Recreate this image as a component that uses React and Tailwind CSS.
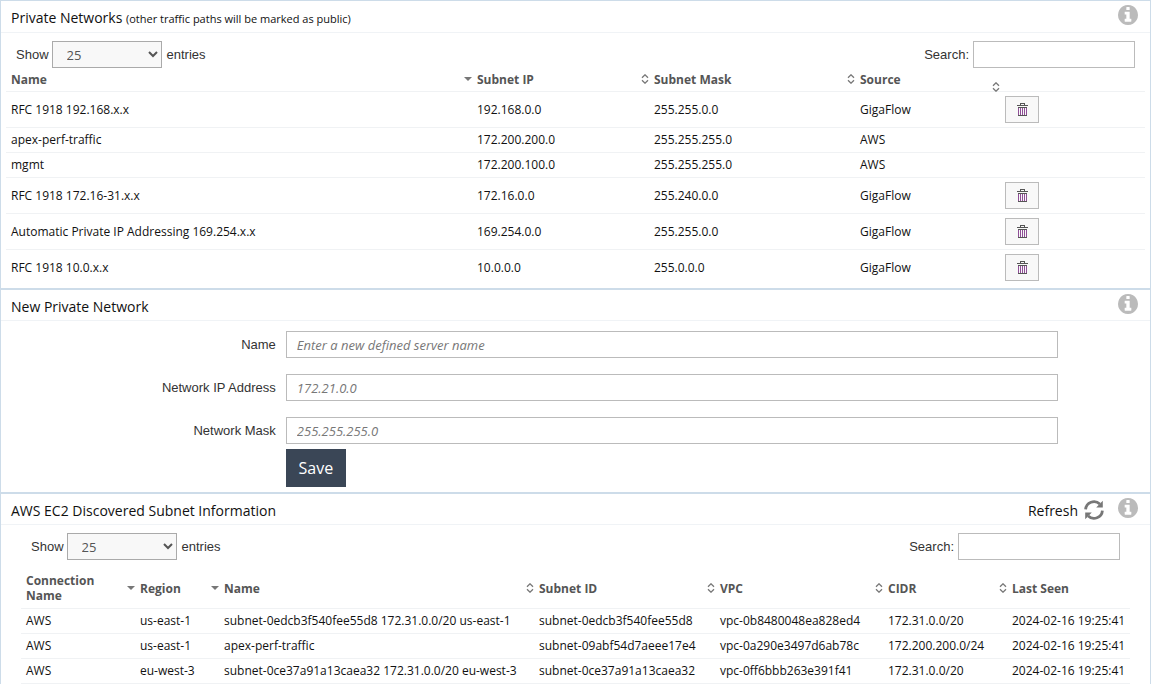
import { useId } from "react";

const networks = [
  ["RFC 1918 192.168.x.x", "192.168.0.0", "255.255.0.0", "GigaFlow"],
  ["apex-perf-traffic", "172.200.200.0", "255.255.255.0", "AWS"],
  ["mgmt", "172.200.100.0", "255.255.255.0", "AWS"],
  ["RFC 1918 172.16-31.x.x", "172.16.0.0", "255.240.0.0", "GigaFlow"],
  ["Automatic Private IP Addressing 169.254.x.x", "169.254.0.0", "255.255.0.0", "GigaFlow"],
  ["RFC 1918 10.0.x.x", "10.0.0.0", "255.0.0.0", "GigaFlow"],
];

const subnets = [
  ["AWS", "us-east-1", "subnet-0edcb3f540fee55d8 172.31.0.0/20 us-east-1", "subnet-0edcb3f540fee55d8", "vpc-0b8480048ea828ed4", "172.31.0.0/20", "2024-02-16 19:25:41"],
  ["AWS", "us-east-1", "apex-perf-traffic", "subnet-09abf54d7aeee17e4", "vpc-0a290e3497d6ab78c", "172.200.200.0/24", "2024-02-16 19:25:41"],
  ["AWS", "eu-west-3", "subnet-0ce37a91a13caea32 172.31.0.0/20 eu-west-3", "subnet-0ce37a91a13caea32", "vpc-0ff6bbb263e391f41", "172.31.0.0/20", "2024-02-16 19:25:41"],
];

function SortIcon({ sorted }) {
  return (
    <svg className="h-[10px] w-[8px] shrink-0" viewBox="0 0 8 10" aria-hidden="true">
      {sorted ? (
        <path d="M0 3h8L4 7z" fill="#777" />
      ) : (
        <path d="M1 3.7L4 0.8 7 3.7M1 6.3L4 9.2 7 6.3" fill="none" stroke="#777" strokeWidth="1.3" />
      )}
    </svg>
  );
}

function TrashIcon() {
  return (
    <svg className="h-[13px] w-[11px]" viewBox="0 0 11 13" shapeRendering="crispEdges" aria-hidden="true">
      <path d="M3 0h5v2H7V1H4v1H3zM0 2h11v1H0zM1 4h9v1H1zM1 12h9v1H1z" fill="#555" />
      <path d="M1 5h1v7H1zM3 5h1v7H3zM5 5h1v7H5zM7 5h1v7H7zM9 5h1v7H9z" fill="#8f4f97" />
    </svg>
  );
}

function InfoIcon() {
  return (
    <svg className="h-[20px] w-[20px]" viewBox="128 128 1536 1536" fill="#bbb" aria-hidden="true">
      <path d="M1152 1376v-160q0-14-9-23t-23-9h-96v-512q0-14-9-23t-23-9h-320q-14 0-23 9t-9 23v160q0 14 9 23t23 9h96v320h-96q-14 0-23 9t-9 23v160q0 14 9 23t23 9h448q14 0 23-9t9-23zM1024 480v-160q0-14-9-23t-23-9h-192q-14 0-23 9t-9 23v160q0 14 9 23t23 9h192q14 0 23-9t9-23zM1664 896q0 209-103 385.5t-279.5 279.5-385.5 103-385.5-103-279.5-279.5-103-385.5 103-385.5 279.5-279.5 385.5-103 385.5 103 279.5 279.5 103 385.5z" />
    </svg>
  );
}

function RefreshIcon() {
  return (
    <svg className="h-[20px] w-[20px]" viewBox="0 0 20 20" aria-hidden="true">
      <path d="M1.6 9.4A8.4 8.4 0 0 1 15.8 4M18.4 10.6A8.4 8.4 0 0 1 4.2 16" fill="none" stroke="#777" strokeWidth="2.8" />
      <path d="M18.8 0.8V7.4H12.2zM1.2 19.2V12.6H7.8z" fill="#777" />
    </svg>
  );
}

function Panel({ title, note, action, children, headClass = "h-[31px]" }) {
  return (
    <section className="border border-[#cddce9] bg-white">
      <header className={`${headClass} flex items-center justify-between border-b border-[#f0f3f6] pl-[10px] pr-3`}>
        <h2 className="pt-[3px] text-[14px] leading-5 text-[#111]">
          {title} {note && <span className="text-[11px]">{note}</span>}
        </h2>
        <div className="flex items-center gap-[14px]">
          {action}
          <button type="button" aria-label="Information" className="pb-[3px]">
            <InfoIcon />
          </button>
        </div>
      </header>
      {children}
    </section>
  );
}

function TableTools() {
  const id = useId();
  return (
    <div className="flex items-center justify-between font-['Liberation_Sans',Arial,sans-serif] text-[13px] text-[#333]">
      <label className="flex items-center gap-[3px]">
        Show
        <select defaultValue="25" className="mr-[2px] h-[27px] w-[110px] border border-[#aaa] bg-[#f8f8f8] pl-[10px] font-['Open_Sans',sans-serif] text-[13px] text-[#555]">
          <option>10</option>
          <option>25</option>
          <option>50</option>
        </select>
        entries
      </label>
      <div className="flex items-center gap-1">
        <label htmlFor={id}>Search:</label>
        <input id={id} type="search" className="h-[27px] w-[162px] border border-[#bbb] bg-white px-2" />
      </div>
    </div>
  );
}

function HeadCell({ children, icon, sorted, low }) {
  return (
    <th className="p-0 pl-[5px] text-left font-bold">
      <div className="flex items-center justify-between">
        <span>{children}</span>
        {icon && (
          <span className={low ? "translate-y-2" : ""}>
            <SortIcon sorted={sorted} />
          </span>
        )}
      </div>
    </th>
  );
}

function Field({ label, placeholder }) {
  const id = useId();
  return (
    <div className="flex items-center gap-[10px]">
      <label htmlFor={id} className="w-[26%] pl-3 text-right font-['Liberation_Sans',Arial,sans-serif] text-[13px] text-[#333]">
        {label}
      </label>
      <input
        id={id}
        placeholder={placeholder}
        className="h-[27px] min-w-0 flex-1 border border-[#bbb] px-[10px] text-[13px] placeholder:italic placeholder:text-[#777]"
      />
    </div>
  );
}

export default function App() {
  return (
    <main className="bg-white font-['Open_Sans',sans-serif] text-[12px] leading-[15px] text-[#111]">
      <Panel title="Private Networks" note="(other traffic paths will be marked as public)" headClass="h-[32px]">
        <div className="px-[15px] pt-2">
          <TableTools />
        </div>
        <div className="px-[5px] pb-[3px]">
          <table className="w-full table-fixed">
            <colgroup>
              <col />
              <col className="w-[177px]" />
              <col className="w-[206px]" />
              <col className="w-[145px]" />
              <col className="w-[145px]" />
            </colgroup>
            <thead className="text-[#555]">
              <tr className="h-[23px] border-b border-[#f0f2f4]">
                <HeadCell icon sorted>Name</HeadCell>
                <HeadCell icon>Subnet IP</HeadCell>
                <HeadCell icon>Subnet Mask</HeadCell>
                <HeadCell icon low>Source</HeadCell>
                <td />
              </tr>
            </thead>
            <tbody>
              {networks.map((row) => (
                <tr key={row[0]} className={`${row[3] === "AWS" ? "h-[25px]" : "h-[36px]"} border-b border-[#f0f2f4] last:border-0`}>
                  {row.map((cell, i) => (
                    <td key={i} className="p-0 pl-[5px]">{cell}</td>
                  ))}
                  <td className="p-0 pl-[5px]">
                    {row[3] !== "AWS" && (
                      <button type="button" aria-label={`Delete ${row[0]}`} className="flex h-[27px] w-[34px] items-center justify-center border border-[#bbb] bg-[#f8f8f8]">
                        <TrashIcon />
                      </button>
                    )}
                  </td>
                </tr>
              ))}
            </tbody>
          </table>
        </div>
      </Panel>

      <Panel title="New Private Network">
        <form className="pt-[10px] pr-[92px] pb-[5px]">
          <div className="flex flex-col gap-4">
            <Field label="Name" placeholder="Enter a new defined server name" />
            <Field label="Network IP Address" placeholder="172.21.0.0" />
            <Field label="Network Mask" placeholder="255.255.255.0" />
          </div>
          <div className="flex gap-[10px] pt-[5px]">
            <div className="w-[26%]" />
            <button type="button" className="h-[38px] w-[60px] bg-[#3a4656] text-[16px] text-white">
              Save
            </button>
          </div>
        </form>
      </Panel>

      <Panel
        title="AWS EC2 Discovered Subnet Information"
        action={
          <button type="button" className="flex items-center gap-[6px] pt-[2px] text-[14px]">
            Refresh
            <RefreshIcon />
          </button>
        }
      >
        <div className="px-[30px] pt-2">
          <TableTools />
        </div>
        <div className="px-5 pt-[9px]">
          <table className="w-full table-fixed">
            <colgroup>
              <col className="w-[114px]" />
              <col className="w-[84px]" />
              <col />
              <col className="w-[181px]" />
              <col className="w-[168px]" />
              <col className="w-[124px]" />
              <col className="w-[123px]" />
            </colgroup>
            <thead className="text-[#555]">
              <tr className="h-[39px] border-b border-[#f0f2f4]">
                <HeadCell icon sorted>Connection<br />Name</HeadCell>
                <HeadCell icon sorted>Region</HeadCell>
                <HeadCell icon>Name</HeadCell>
                <HeadCell icon>Subnet ID</HeadCell>
                <HeadCell icon>VPC</HeadCell>
                <HeadCell icon>CIDR</HeadCell>
                <HeadCell>Last Seen</HeadCell>
              </tr>
            </thead>
            <tbody>
              {subnets.map((row) => (
                <tr key={row[3]} className="h-[25px] border-b border-[#f0f2f4]">
                  {row.map((cell, i) => (
                    <td key={i} className="whitespace-nowrap p-0 pl-[5px]">{cell}</td>
                  ))}
                </tr>
              ))}
            </tbody>
          </table>
        </div>
      </Panel>
    </main>
  );
}
